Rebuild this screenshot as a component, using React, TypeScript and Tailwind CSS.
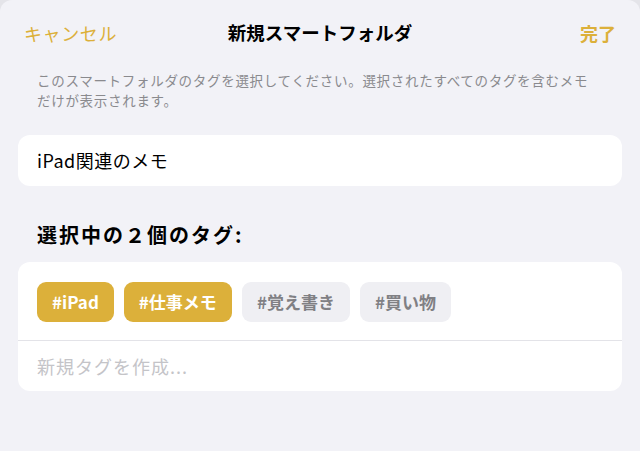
import React from "react";

const font = { fontFamily: '"Noto Sans CJK JP", "Noto Sans", sans-serif' };

function Chip({ label, active }: { label: string; active: boolean }) {
  return (
    <div
      className={
        "h-[40px] flex items-center px-[15px] rounded-[9px] text-[17px] font-bold " +
        (active ? "bg-[#dcb03a] text-white" : "bg-[#efeff3] text-[#808084]")
      }
    >
      {label}
    </div>
  );
}

export default function App() {
  return (
    <div className="w-[640px] h-[451px] bg-[#e4e4e9] overflow-hidden" style={font}>
      <div className="w-full h-full bg-[#f2f2f7] rounded-t-[12px] flex flex-col">
        <div className="h-[66px] flex items-center justify-between px-[24px] relative">
          <span className="text-[18px] tracking-[0.6px] text-[#dcb03a]">キャンセル</span>
          <span className="absolute left-0 right-0 text-center text-[18.5px] font-bold text-black pointer-events-none">
            新規スマートフォルダ
          </span>
          <span className="text-[18px] font-bold text-[#dcb03a]">完了</span>
        </div>
        <div className="px-[37px] mt-[4px] text-[13.5px] leading-[20px] tracking-[0.7px] text-[#8a8a8e] whitespace-nowrap">
          このスマートフォルダのタグを選択してください。選択されたすべてのタグを含むメモ
          <br />
          だけが表示されます。
        </div>
        <div className="mx-[18px] mt-[25px] h-[51px] bg-white rounded-[12px] flex items-center px-[19px] text-[18px] tracking-[0.5px] text-black">
          iPad関連のメモ
        </div>
        <div className="px-[37px] mt-[36px] text-[20px] leading-[26px] tracking-[2px] font-bold text-black">
          選択中の２個のタグ:
        </div>
        <div className="mx-[18px] mt-[14px] bg-white rounded-[12px] flex flex-col">
          <div className="flex gap-[10px] px-[19px] pt-[20px] pb-[18px]">
            <Chip label="#iPad" active />
            <Chip label="#仕事メモ" active />
            <Chip label="#覚え書き" active={false} />
            <Chip label="#買い物" active={false} />
          </div>
          <div className="h-[1px] bg-[#e3e3e8]" />
          <div className="h-[50px] flex items-center px-[19px] text-[18px] tracking-[1px] text-[#c4c4c8]">
            新規タグを作成...
          </div>
        </div>
      </div>
    </div>
  );
}
